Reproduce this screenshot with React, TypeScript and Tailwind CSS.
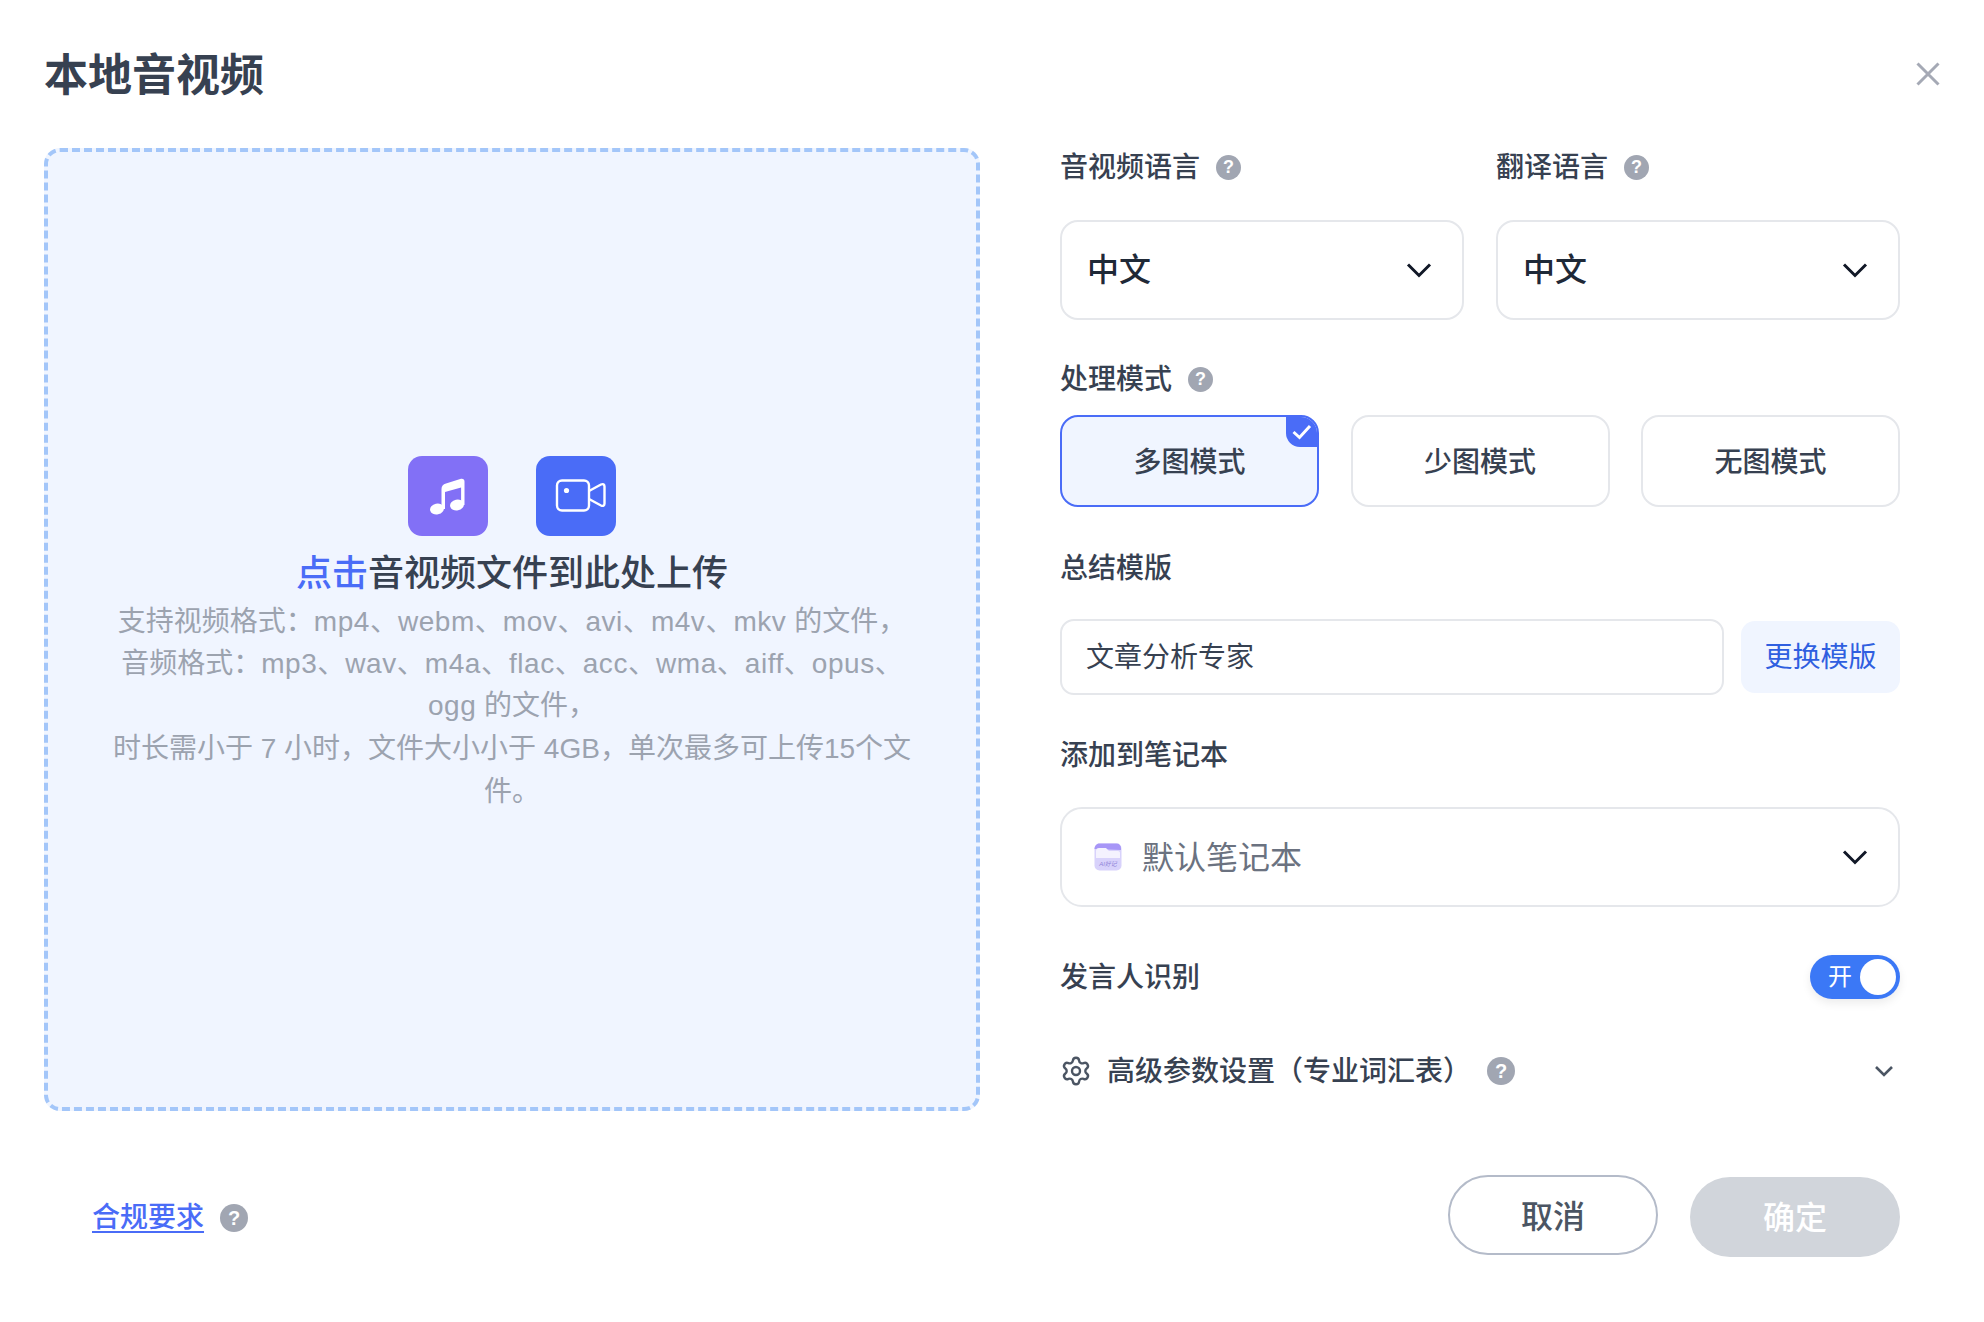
import { Settings } from "lucide-react"

const font = "font-['Liberation_Sans','Noto_Sans_CJK_SC',sans-serif]"

function Help({ size = "w-[25px] h-[25px] text-[18px]", className = "" }: { size?: string; className?: string }) {
  return (
    <span className={`inline-flex items-center justify-center rounded-full bg-[#a1a6b2] font-bold leading-none text-white ${size} ${className}`}>
      ?
    </span>
  )
}

function Chevron({ small = false }: { small?: boolean }) {
  return small ? (
    <svg width="20" height="12" viewBox="0 0 20 12" fill="none" stroke="#4b5563" strokeWidth="2.6">
      <path d="M2 2l8 8 8-8" />
    </svg>
  ) : (
    <svg width="26" height="16" viewBox="0 0 26 16" fill="none" stroke="#111827" strokeWidth="3">
      <path d="M2 2.5l11 11 11-11" />
    </svg>
  )
}

function Label({ text, help, className = "" }: { text: string; help?: boolean; className?: string }) {
  return (
    <div className={`flex h-[38px] items-center text-[28px] font-medium leading-none text-[#374151] ${className}`}>
      <span className="pt-[2px]">{text}</span>
      {help && <Help className="ml-[16px]" />}
    </div>
  )
}

// latin runs sit a bit wider than Arial in the reference
function Latin({ children }: { children: string }) {
  return <span className="tracking-[0.55px]">{children}</span>
}

function LangSelect({ label }: { label: string }) {
  return (
    <div className="w-[404px]">
      <Label text={label} help />
      <div className="mt-[34px] flex h-[100px] items-center justify-between rounded-[18px] border-2 border-[#e5e7eb] pl-[25px] pr-[30px]">
        <span className="text-[32px] font-medium text-[#1f2937]">中文</span>
        <Chevron />
      </div>
    </div>
  )
}

function ModeButton({ text, active }: { text: string; active?: boolean }) {
  return (
    <div
      className={`relative flex h-[92px] w-[259px] items-center justify-center overflow-hidden rounded-[18px] border-2 pt-[3px] text-[28px] font-medium text-[#374151] ${
        active ? "border-[#4a6cf7] bg-[#f0f5ff]" : "border-[#e5e7eb] bg-white"
      }`}
    >
      {text}
      {active && (
        <span className="absolute right-0 top-0 flex h-[30px] w-[31px] items-center justify-center rounded-bl-[14px] bg-[#4a6cf7]">
          <svg width="20" height="16" viewBox="0 0 20 16" fill="none" stroke="white" strokeWidth="3">
            <path d="M1.5 8l6 5.5L18 2" />
          </svg>
        </span>
      )}
    </div>
  )
}

function MusicIcon() {
  return (
    <div className="h-[80px] w-[80px] rounded-[14px] bg-[#8270f6]">
      <svg width="80" height="80" viewBox="0 0 80 80" fill="white">
        <ellipse cx="29" cy="53" rx="7" ry="5.4" transform="rotate(-12 29 53)" />
        <ellipse cx="49" cy="49" rx="7" ry="5.4" transform="rotate(-12 49 49)" />
        <path d="M33.5 53V33c0-3 1.5-5 4.5-5.6l15-4.6c2-.5 3.5.6 3.5 2.6V49h-3.4V31.5L37 36v17z" />
      </svg>
    </div>
  )
}

function VideoIcon() {
  return (
    <div className="h-[80px] w-[80px] rounded-[14px] bg-[#4a6cf7]">
      <svg width="80" height="80" viewBox="0 0 80 80" fill="none" stroke="white" strokeWidth="2.4" strokeLinejoin="round">
        <rect x="21" y="24.5" width="32" height="30" rx="5" />
        <path d="M53 35l12-6.500c2-1 3.500 0 3.500 2v17c0 2-1.500 3-3.500 2l-12-6.500" />
        <circle cx="30.500" cy="34.500" r="2.600" fill="white" stroke="none" />
      </svg>
    </div>
  )
}

function NotebookIcon() {
  return (
    <svg width="28" height="28" viewBox="0 0 28 28" className="shrink-0">
      <rect x="0.500" y="0.500" width="27" height="27" rx="5" fill="#d8d2fb" />
      <path d="M0.500 6c0-3 2-5.500 5-5.500h17c3 0 4.500 2 4.500 5v1.500z" fill="#a796f7" />
      <path d="M2 8c0-2 1-3 3-3h7l3 3h9c1.500 0 2 1 2 2v5H2z" fill="#f4f2fe" />
      <text x="14" y="23" textAnchor="middle" fontSize="6" fontStyle="italic" fill="#8f83d8">
        AI好记
      </text>
    </svg>
  )
}

export default function App() {
  return (
    <div className={`h-[1322px] w-[1984px] overflow-hidden bg-white ${font}`}>
      {/* Header */}
      <div className="flex h-[148px] items-start justify-between pl-[44px] pr-[44px] pt-[47px]">
        <h1 className="text-[44px] font-bold leading-[58px] text-[#374151]">本地音视频</h1>
        <svg width="24" height="24" viewBox="0 0 24 24" fill="none" stroke="#a5a9b5" strokeWidth="3" className="mt-[15px]">
          <path d="M1.500 1.500l21 21M22.500 1.500l-21 21" />
        </svg>
      </div>

      <div className="flex items-start pl-[44px]">
        {/* Upload area */}
        <div className="flex h-[963px] w-[936px] flex-col items-center rounded-[16px] border-[4px] border-dashed border-[#a3c6f9] bg-[#f0f5ff] pt-[304px]">
          <div className="flex gap-[48px]">
            <MusicIcon />
            <VideoIcon />
          </div>
          <div className="mt-[11px] text-[36px] font-medium leading-[54px] text-[#374151]">
            <span className="text-[#4a6cf7]">点击</span>音视频文件到此处上传
          </div>
          <div className="whitespace-nowrap text-center text-[28px] leading-[42px] text-[#9ca3af]">
            <div>
              支持视频格式：<Latin>mp4</Latin>、<Latin>webm</Latin>、<Latin>mov</Latin>、<Latin>avi</Latin>、<Latin>m4v</Latin>、<Latin>mkv</Latin> 的文件，
            </div>
            <div>
              音频格式：<Latin>mp3</Latin>、<Latin>wav</Latin>、<Latin>m4a</Latin>、<Latin>flac</Latin>、<Latin>acc</Latin>、<Latin>wma</Latin>、<Latin>aiff</Latin>、<Latin>opus</Latin>、
            </div>
            <div>
              <Latin>ogg</Latin> 的文件，
            </div>
            <div className="pt-[1px]">时长需小于 7 小时，文件大小小于 4GB，单次最多可上传15个文</div>
            <div className="pt-[1px]">件。</div>
          </div>
        </div>

        {/* Settings */}
        <div className="ml-[80px] w-[840px]">
          <div className="flex gap-[32px]">
            <LangSelect label="音视频语言" />
            <LangSelect label="翻译语言" />
          </div>

          <Label text="处理模式" help className="mt-[40px]" />
          <div className="mt-[17px] flex justify-between">
            <ModeButton text="多图模式" active />
            <ModeButton text="少图模式" />
            <ModeButton text="无图模式" />
          </div>

          <Label text="总结模版" className="mt-[42px]" />
          <div className="mt-[32px] flex items-center gap-[17px]">
            <div className="flex h-[76px] flex-1 items-center rounded-[14px] border-2 border-[#e5e7eb] pl-[24px] pt-[2px] text-[28px] text-[#374151]">
              文章分析专家
            </div>
            <div className="flex h-[72px] w-[159px] items-center justify-center rounded-[14px] bg-[#f0f5ff] pt-[2px] text-[28px] text-[#2f5fe0]">
              更换模版
            </div>
          </div>

          <Label text="添加到笔记本" className="mt-[41px]" />
          <div className="mt-[33px] flex h-[100px] items-center rounded-[22px] border-2 border-[#e5e7eb] pl-[32px] pr-[30px]">
            <NotebookIcon />
            <span className="ml-[20px] flex-1 pt-[2px] text-[32px] text-[#6b7280]">默认笔记本</span>
            <Chevron />
          </div>

          <div className="mt-[48px] flex h-[44px] items-center justify-between">
            <span className="pt-[2px] text-[28px] font-medium text-[#374151]">发言人识别</span>
            <div className="relative flex h-[44px] w-[90px] items-center rounded-full bg-[#3b78f6] pl-[18px] text-[24px] leading-none text-white shadow-[0_4px_10px_rgba(0,0,0,0.08)]">
              开
              <span className="absolute right-[4px] top-[4px] h-[36px] w-[36px] rounded-full bg-white" />
            </div>
          </div>

          <div className="mt-[52px] flex h-[40px] items-center">
            <Settings size={32} strokeWidth={1.8} className="text-[#4b5563]" />
            <span className="ml-[15px] pt-[2px] text-[28px] font-medium text-[#374151]">高级参数设置（专业词汇表）</span>
            <Help size="w-[28px] h-[28px] text-[20px]" className="ml-[16px]" />
            <span className="ml-auto mr-[6px] flex">
              <Chevron small />
            </span>
          </div>
        </div>
      </div>

      {/* Footer */}
      <div className="mt-[64px] flex items-start justify-between pl-[92px] pr-[84px]">
        <div className="mt-[21px] flex items-center gap-[16px]">
          <span className="pt-[1px] text-[28px] font-medium text-[#4a6cf7] underline underline-offset-4">合规要求</span>
          <Help size="w-[28px] h-[28px] text-[20px]" />
        </div>
        <div className="flex items-start gap-[32px]">
          <div className="flex h-[80px] w-[210px] items-center justify-center rounded-full border-2 border-[#b4bbc9] pt-[3px] text-[32px] font-medium text-[#4b5563]">
            取消
          </div>
          <div className="mt-[2px] flex h-[80px] w-[210px] items-center justify-center rounded-full bg-[#d1d5db] pt-[2px] text-[32px] font-medium text-white">
            确定
          </div>
        </div>
      </div>
    </div>
  )
}
